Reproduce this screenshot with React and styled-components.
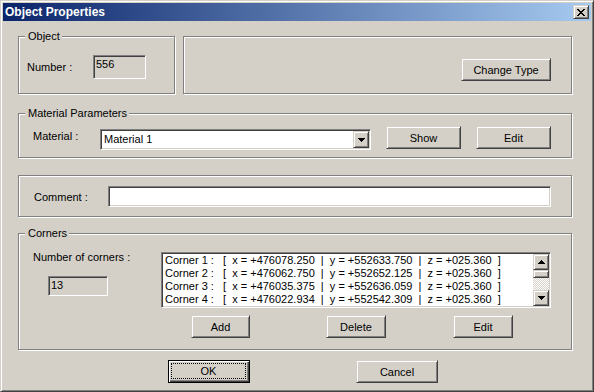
import React from 'react'
import styled, { createGlobalStyle } from 'styled-components'

const GlobalStyle = createGlobalStyle`
  body { margin: 0; background: #d4d0c8; }
  * { box-sizing: border-box; }
`

const Window = styled.div`
  width: 594px;
  height: 392px;
  background: #d4d0c8;
  border: 1px solid;
  border-color: #d4d0c8 #404040 #404040 #d4d0c8;
  box-shadow: inset 1px 1px #fff, inset -1px -1px #808080;
  padding: 2px;
  font-family: "Liberation Sans", Arial, sans-serif;
  font-size: 11px;
  line-height: 13px;
  color: #000;
  display: flex;
  flex-direction: column;
`

const TitleBar = styled.div`
  height: 18px;
  display: flex;
  align-items: center;
  justify-content: space-between;
  padding: 0 2px;
  background: linear-gradient(to right, #0a246a, #a6caf0);
  color: #fff;
  font-weight: bold;
  font-size: 12px;
`

const Bevel = `
  background: #d4d0c8;
  border: 1px solid;
  border-color: #d4d0c8 #404040 #404040 #d4d0c8;
  box-shadow: inset 1px 1px #fff, inset -1px -1px #808080;
`

const CloseButton = styled.div`
  ${Bevel}
  width: 16px;
  height: 14px;
  display: flex;
  align-items: center;
  justify-content: center;
  color: #000;
`

const Content = styled.div`
  display: flex;
  flex-direction: column;
  padding: 9px 19px 0 15px;
`

const Row = styled.div`
  display: flex;
  align-items: flex-end;
  gap: ${p => p.$gap || 0}px;
  margin-top: ${p => p.$mt || 0}px;
  padding-left: ${p => p.$pl || 0}px;
`

const Group = styled.fieldset`
  margin: 0;
  padding: 0;
  min-width: 0;
  border: 1px solid #808080;
  box-shadow: inset 1px 1px #fff, 1px 1px #fff;
  height: ${p => p.$h}px;
  width: ${p => (p.$w ? `${p.$w}px` : 'auto')};
  flex: ${p => (p.$w ? 'none' : '1')};
`

const Legend = styled.legend`
  margin-left: 6px;
  padding: 0 2px 0 3px;
  line-height: 13px;
  background: #d4d0c8;
`

const GroupBody = styled.div`
  display: flex;
  align-items: ${p => p.$align || 'flex-start'};
  justify-content: ${p => p.$justify || 'flex-start'};
  padding: ${p => p.$pad};
`

const Label = styled.div`
  width: ${p => p.$w}px;
  flex: none;
  margin-top: ${p => p.$mt || 0}px;
`

const Field = styled.div`
  width: ${p => (p.$w ? `${p.$w}px` : 'auto')};
  flex: ${p => (p.$w ? 'none' : '1')};
  height: ${p => p.$h}px;
  margin-top: ${p => p.$mt || 0}px;
  margin-left: ${p => p.$ml || 0}px;
  background: ${p => (p.$white ? '#fff' : '#d4d0c8')};
  border: 1px solid;
  border-color: #808080 #fff #fff #808080;
  box-shadow: inset 1px 1px #404040, inset -1px -1px #d4d0c8;
  padding: 2px;
`

const Select = styled(Field)`
  display: flex;
  padding: 1px;
`

const SelectText = styled.div`
  flex: 1;
  padding-left: 2px;
  line-height: 17px;
`

const ArrowBox = styled.div`
  ${Bevel}
  width: 16px;
  height: ${p => p.$h || 16}px;
  flex: none;
  display: flex;
  align-items: center;
  justify-content: center;
`

const Button = styled.button`
  ${Bevel}
  width: ${p => p.$w}px;
  height: 23px;
  flex: none;
  margin-left: ${p => p.$ml || 0}px;
  padding: 0;
  font-family: inherit;
  font-size: 11px;
  font-weight: 400;
  color: #000;
`

const DefaultButton = styled(Button)`
  border-color: #000;
  box-shadow: inset 1px 1px #fff, inset -1px -1px #404040, inset -2px -2px #808080;
  padding: 2px 3px 3px 2px;
  display: flex;
`

const FocusRect = styled.span`
  flex: 1;
  display: flex;
  align-items: center;
  justify-content: center;
  border: 1px dotted #000;
`

const Column = styled.div`
  display: flex;
  flex-direction: column;
  width: ${p => p.$w}px;
  flex: none;
`

const ListBox = styled(Field)`
  background: #fff;
  display: flex;
  padding: 1px;
`

const ListRows = styled.div`
  flex: 1;
  padding-left: 2px;
  white-space: pre;
  overflow: hidden;
`

const ListRow = styled.div`
  height: 13px;
  line-height: 13px;
`

const RowLabel = styled.span`
  display: inline-block;
  width: 58px;
`

const ScrollBar = styled.div`
  width: 16px;
  display: flex;
  flex-direction: column;
`

const Thumb = styled.div`
  ${Bevel}
  height: 8px;
`

const Track = styled.div`
  flex: 1;
  background: repeating-conic-gradient(#fff 0 25%, #d4d0c8 0 50%) 0 0 / 2px 2px;
`

const ButtonRow = styled.div`
  display: flex;
  margin-top: 7px;
`

const UpArrow = () => (
  <svg width="7" height="4" viewBox="0 0 7 4" shapeRendering="crispEdges">
    <path d="M3 0h1v1h1v1h1v1h1v1H0V3h1V2h1V1h1z" fill="#000" />
  </svg>
)

const DownArrow = () => (
  <svg width="7" height="4" viewBox="0 0 7 4" shapeRendering="crispEdges">
    <path d="M0 0h7v1H6v1H5v1H4v1H3V3H2V2H1V1H0z" fill="#000" />
  </svg>
)

const CloseIcon = () => (
  <svg width="8" height="7" viewBox="0 0 8 7" shapeRendering="crispEdges">
    <path d="M0 0h2v1h1v1h2V1h1V0h2v1H7v1H6v1H5v1h1v1h1v1h1v1H6V6H5V5H3v1H2v1H0V6h1V5h1V4h1V3H2V2H1V1H0z" fill="#000" />
  </svg>
)

const corners = [
  ['Corner 1 :', '476078.250', '552633.750', '025.360'],
  ['Corner 2 :', '476062.750', '552652.125', '025.360'],
  ['Corner 3 :', '476035.375', '552636.059', '025.360'],
  ['Corner 4 :', '476022.934', '552542.309', '025.360'],
]

export default function App() {
  return (
    <>
      <GlobalStyle />
      <Window>
        <TitleBar>
          <span>Object Properties</span>
          <CloseButton><CloseIcon /></CloseButton>
        </TitleBar>
        <Content>
          <Row $gap={8}>
            <Group $w={157} $h={64}>
              <Legend>Object</Legend>
              <GroupBody $align="center" $pad="12px 0 0 8px">
                <Label $w={66}>Number :</Label>
                <Field $w={53} $h={24}>556</Field>
              </GroupBody>
            </Group>
            <Group $h={58}>
              <GroupBody $justify="flex-end" $pad="21px 20px 0 0">
                <Button $w={90}>Change Type</Button>
              </GroupBody>
            </Group>
          </Row>

          <Row $mt={13}>
            <Group $h={51}>
              <Legend>Material Parameters</Legend>
              <GroupBody $pad="6px 20px 0 14px">
                <Label $w={67} $mt={4}>Material :</Label>
                <Select $w={271} $h={21} $mt={3} $white>
                  <SelectText>Material 1</SelectText>
                  <ArrowBox $h={17}><DownArrow /></ArrowBox>
                </Select>
                <Button $w={75} $ml={15}>Show</Button>
                <Button $w={75} $ml={15}>Edit</Button>
              </GroupBody>
            </Group>
          </Row>

          <Row $mt={17}>
            <Group $h={42}>
              <GroupBody $pad="10px 20px 0 15px">
                <Label $w={74} $mt={5}>Comment :</Label>
                <Field $h={21} $white />
              </GroupBody>
            </Group>
          </Row>

          <Row $mt={10}>
            <Group $h={123}>
              <Legend>Corners</Legend>
              <GroupBody $pad="12px 20px 0 14px">
                <Column $w={128}>
                  <Label $mt={-1}>Number of corners :</Label>
                  <Field $w={60} $h={20} $mt={12} $ml={15}>13</Field>
                </Column>
                <Column $w={390}>
                  <ListBox $h={56}>
                    <ListRows>
                      {corners.map(([name, x, y, z]) => (
                        <ListRow key={name}>
                          <RowLabel>{name}</RowLabel>
                          {`[  x = +${x}  |  y = +${y}  |  z = +${z}  ]`}
                        </ListRow>
                      ))}
                    </ListRows>
                    <ScrollBar>
                      <ArrowBox><UpArrow /></ArrowBox>
                      <Thumb />
                      <Track />
                      <ArrowBox><DownArrow /></ArrowBox>
                    </ScrollBar>
                  </ListBox>
                  <ButtonRow>
                    <Button $w={59} $ml={30}>Add</Button>
                    <Button $w={60} $ml={76}>Delete</Button>
                    <Button $w={60} $ml={67}>Edit</Button>
                  </ButtonRow>
                </Column>
              </GroupBody>
            </Group>
          </Row>

          <Row $mt={10} $pl={150} $gap={106}>
            <DefaultButton $w={82}>
              <FocusRect>OK</FocusRect>
            </DefaultButton>
            <Button $w={82}>Cancel</Button>
          </Row>
        </Content>
      </Window>
    </>
  )
}
